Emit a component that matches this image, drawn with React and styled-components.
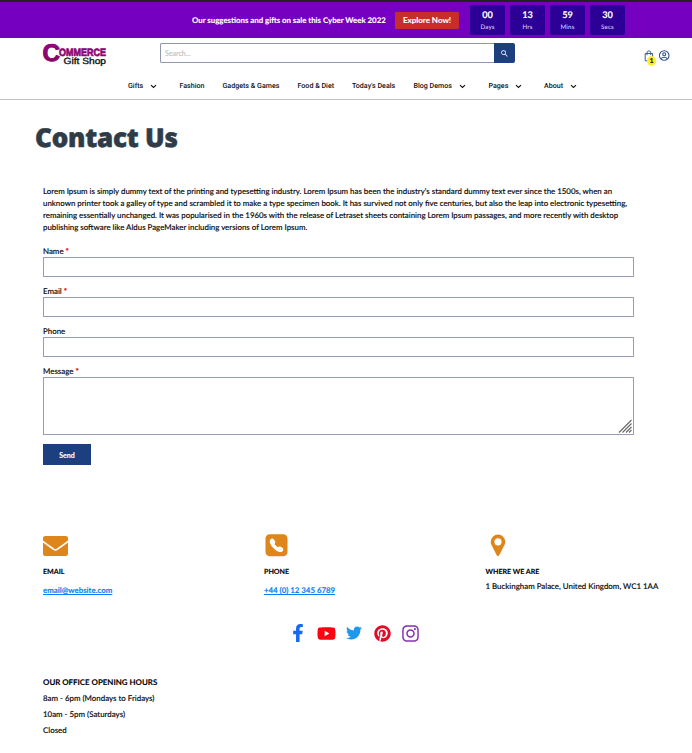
import React from "react";
import styled, { createGlobalStyle } from "styled-components";
import {
  FaFacebookF,
  FaYoutube,
  FaTwitter,
  FaPinterest,
  FaInstagram,
} from "react-icons/fa";
import { BsTelephoneFill } from "react-icons/bs";
import { MdSearch } from "react-icons/md";

const GlobalStyle = createGlobalStyle`
  *, *::before, *::after { box-sizing: border-box; }
  body {
    margin: 0;
    background: #fff;
    color: #080808;
    font-family: Lato, "Liberation Sans", sans-serif;
    font-size: 7.9px;
    font-weight: 500;
    line-height: 12px;
    text-rendering: geometricPrecision;
    -webkit-text-stroke: 0.12px;
  }
  h1, h2, p { margin: 0; }
`;

const Page = styled.div`
  height: 753px;
  overflow: hidden;
`;

const PromoBar = styled.div`
  height: 38px;
  border-top: 2px solid #222222;
  background: #7500c0;
  display: flex;
  align-items: center;
  padding-left: 192px;
  color: #fff;
`;

const PromoText = styled.span`
  width: 203px;
  font-size: 7.83px;
  font-weight: 700;
  white-space: nowrap;
`;

const PromoButton = styled.button`
  width: 64px;
  height: 17px;
  margin-right: 11px;
  padding: 0;
  border: 0;
  border-radius: 1px;
  background: #c82d2d;
  color: #fff;
  font: 700 8px Lato, sans-serif;
`;

const Countdown = styled.div`
  display: flex;
  gap: 5px;
`;

const CountBox = styled.div`
  width: 35px;
  height: 30px;
  border-radius: 2px;
  background: #2c0096;
  display: flex;
  flex-direction: column;
  align-items: center;
`;

const CountValue = styled.b`
  margin-top: 4px;
  font-size: 9.2px;
  font-weight: 700;
  line-height: 12px;
`;

const CountUnit = styled.span`
  margin-top: 2px;
  font-size: 6.2px;
  line-height: 9px;
  letter-spacing: 0.15px;
  color: #ddd0f5;
  -webkit-text-stroke: 0;
`;

const Header = styled.header`
  height: 62px;
  border-bottom: 1px solid #bfc3c2;
`;

const HeaderTop = styled.div`
  height: 35px;
  display: flex;
  align-items: flex-start;
  padding: 5px 22px 0 43px;
`;

const LogoLink = styled.a`
  width: 117px;
  height: 25px;
`;

const SearchForm = styled.form`
  display: flex;
  width: 355px;
  height: 20px;
`;

const SearchInput = styled.input`
  flex: 1;
  min-width: 0;
  padding: 0 0 0 4px;
  border: 1px solid #8e96b2;
  border-right: 0;
  border-radius: 2px 0 0 2px;
  font: 500 7px Lato, sans-serif;
  &::placeholder { color: #c2c2c2; }
`;

const SearchButton = styled.button`
  width: 21px;
  padding: 0;
  border: 0;
  border-radius: 0 2px 2px 0;
  background: #1c3f80;
  color: #fff;
  display: flex;
  align-items: center;
  justify-content: center;
`;

const Tools = styled.div`
  margin-left: auto;
  margin-top: 7px;
  display: flex;
  gap: 4px;
`;

const Bag = styled.span`
  position: relative;
  width: 11px;
  height: 12px;
`;

const BagCount = styled.span`
  position: absolute;
  left: 3px;
  top: 6px;
  width: 9px;
  height: 10px;
  border-radius: 50%;
  background: #ffee2e;
  color: #111;
  font-size: 7px;
  font-weight: 700;
  line-height: 11px;
  text-align: center;
`;

const Nav = styled.nav`
  display: flex;
  align-items: center;
  height: 26px;
  padding-left: 128px;
`;

const NavItem = styled.a`
  width: ${(p) => p.$width}px;
  display: flex;
  align-items: center;
  gap: 8px;
  font: 500 7.1px Roboto, sans-serif;
  line-height: 10px;
  white-space: nowrap;
  color: #111;
  -webkit-text-stroke: 0;
`;

const Title = styled.h1`
  margin: 19px 0 0 35px;
  font: 800 26px "Open Sans", sans-serif;
  line-height: 36px;
  letter-spacing: -0.22px;
  -webkit-text-stroke: 0.55px;
  color: #2f3c48;
`;

const Content = styled.main`
  padding: 30px 0 0 43px;
`;

const Intro = styled.p`
  width: 591px;
  font-size: 7.88px;
  white-space: pre;
`;

const ContactForm = styled.form`
  width: 591px;
  margin-top: 12px;
  display: flex;
  flex-direction: column;
`;

const Field = styled.label`
  display: flex;
  flex-direction: column;
  margin-bottom: 8px;
`;

const LabelText = styled.span`
  height: 12px;
`;

const Required = styled.span`
  color: #d40f0f;
  font-weight: 900;
`;

const TextInput = styled.input`
  height: 20px;
  border: 1px solid #979db5;
  padding: 0 4px;
`;

const MessageArea = styled.div`
  height: 58px;
  border: 1px solid #979db5;
  display: flex;
  align-items: flex-end;
  justify-content: flex-end;
  padding: 0 1px 1px 0;
`;

const MessageInput = styled.textarea`
  flex: 1;
  height: 100%;
  border: 0;
  resize: none;
  outline: 0;
`;

const SendButton = styled.button`
  width: 48px;
  height: 21px;
  margin-top: 1px;
  padding: 1px 0 0;
  border: 0;
  background: #1c3f80;
  color: #fff;
  font: 700 7px Lato, sans-serif;
`;

const Cards = styled.section`
  display: grid;
  grid-template-columns: 221px 221.5px 1fr;
  margin-top: 67px;
`;

const Card = styled.div`
  white-space: nowrap;
`;

const CardIcon = styled.div`
  height: 27px;
  display: flex;
  align-items: center;
`;

const CardTitle = styled.h2`
  margin-top: 7px;
  font-size: 7.1px;
  font-weight: 700;
  line-height: 12px;
  color: #000;
`;

const CardLink = styled.a`
  display: block;
  margin-top: 6px;
  font-size: 7.85px;
  font-weight: 700;
  color: #0a80f5;
  text-decoration: underline;
`;

const Address = styled.p`
  margin-top: 2px;
`;

const Socials = styled.div`
  display: flex;
  align-items: center;
  height: 20px;
  margin: 27px 0 0 241px;
`;

const SocialLink = styled.a`
  width: 28px;
  height: 20px;
  display: flex;
  align-items: center;
  justify-content: center;
  color: ${(p) => p.$color};
`;

const Hours = styled.section`
  margin-top: 31px;
  line-height: 16px;
`;

const HoursTitle = styled.h2`
  font-size: 7.9px;
  font-weight: 700;
  line-height: 16px;
  color: #000;
`;

const counts = [["00", "Days"], ["13", "Hrs"], ["59", "Mins"], ["30", "Secs"]];

const navItems = [
  { label: "Gifts", width: 51.5, menu: true },
  { label: "Fashion", width: 43 },
  { label: "Gadgets & Games", width: 75 },
  { label: "Food & Diet", width: 54.5 },
  { label: "Today's Deals", width: 61.5 },
  { label: "Blog Demos", width: 75, menu: true },
  { label: "Pages", width: 55.5, menu: true },
  { label: "About", width: 40, menu: true },
];

const socials = [
  { name: "Facebook", Icon: FaFacebookF, color: "#1769f0", size: 18 },
  { name: "YouTube", Icon: FaYoutube, color: "#fb0510", size: 19 },
  { name: "Twitter", Icon: FaTwitter, color: "#1d98ed", size: 16 },
  { name: "Pinterest", Icon: FaPinterest, color: "#e30a28", size: 17 },
  { name: "Instagram", Icon: FaInstagram, color: "#8732b2", size: 19 },
];

const introText = `Lorem Ipsum is simply dummy text of the printing and typesetting industry. Lorem Ipsum has been the industry's standard dummy text ever since the 1500s, when an
unknown printer took a galley of type and scrambled it to make a type specimen book. It has survived not only five centuries, but also the leap into electronic typesetting,
remaining essentially unchanged. It was popularised in the 1960s with the release of Letraset sheets containing Lorem Ipsum passages, and more recently with desktop
publishing software like Aldus PageMaker including versions of Lorem Ipsum.`;

function Logo() {
  return (
    <svg width="66" height="26" viewBox="0 0 66 26" overflow="visible" aria-label="Commerce Gift Shop">
      <defs>
        <linearGradient id="brand" x1="0" y1="0" x2="0" y2="1">
          <stop offset="0" stopColor="#95088f" />
          <stop offset="1" stopColor="#86004e" />
        </linearGradient>
      </defs>
      <g fontFamily="Liberation Sans, sans-serif">
        <text x="-0.5" y="18" fontSize="24" fontWeight="700" fill="url(#brand)" stroke="#8d0570" strokeWidth="1" textLength="17.5" lengthAdjust="spacingAndGlyphs">C</text>
        <text x="16" y="12.7" fontSize="10.6" fontWeight="700" fill="#8d0570" stroke="#8d0570" strokeWidth="0.7" textLength="47" lengthAdjust="spacingAndGlyphs">OMMERCE</text>
        <text x="20.5" y="20.8" fontSize="9" fill="#111" stroke="#111" strokeWidth="0.35" textLength="42.5" lengthAdjust="spacingAndGlyphs">Gift Shop</text>
      </g>
    </svg>
  );
}

function Chevron() {
  return (
    <svg width="5" height="4" viewBox="0 0 5 4" fill="none" stroke="#111" strokeWidth="1.1" overflow="visible">
      <path d="M0 1.2 2.5 3.5 5 1.2" />
    </svg>
  );
}

function BagIcon() {
  return (
    <svg width="10" height="12" viewBox="0 0 10 12" fill="none" stroke="#3d5c94" strokeWidth="1">
      <path d="M1.2 3.5h7.4v7.3H1.2zM3 5.2V2.8a1.9 1.9 0 0 1 3.8 0v2.4" />
    </svg>
  );
}

function UserIcon() {
  return (
    <svg width="11" height="11" viewBox="0 0 11 11" fill="none" stroke="#2d5190" strokeWidth="1.1">
      <circle cx="5.2" cy="5.5" r="4.8" />
      <circle cx="5.2" cy="4.3" r="1.5" />
      <path d="M2.1 8.8c.6-1.1 1.7-1.5 3.1-1.5s2.5.4 3.1 1.5" />
    </svg>
  );
}

function ResizeGrip() {
  return (
    <svg width="14" height="14" viewBox="0 0 14 14" stroke="#666" strokeWidth="1.1">
      <path d="M1 13.500 13.500 1M4.500 13.500l9-9M8 13.500l5.500-5.500M11 13.500l2.500-2.500" />
    </svg>
  );
}

function EnvelopeIcon() {
  return (
    <svg width="25" height="27" viewBox="0 0 25 27">
      <rect y="4" width="25" height="20" rx="2.2" fill="#de861c" />
      <path d="M-.5 9.2C4 12.7 8 15.3 10.5 17.1c1.5 1.1 2.5 1.1 4 0C17 15.3 21 12.7 25.5 9.2" fill="none" stroke="#fff" strokeWidth="1.6" />
    </svg>
  );
}

function PhoneIcon() {
  return (
    <svg width="25" height="27" viewBox="0 0 25 27">
      <rect x="1.5" y="2.3" width="22" height="22" rx="4.2" fill="#de861c" />
      <BsTelephoneFill x="5.5" y="6.3" size={14} color="#fff" />
    </svg>
  );
}

function PinIcon() {
  return (
    <svg width="25" height="27" viewBox="0 0 25 27">
      <path
        d="M12 2.5a7.3 7.3 0 0 0-7.3 7.3c0 1.3.3 2.3.8 3.3l5.2 10.2c.5 1.1 2.1 1.1 2.6 0l5.2-10.2c.5-1 .8-2 .8-3.3A7.3 7.3 0 0 0 12 2.5zm0 3.700a3.6 3.6 0 1 1 0 7.2 3.6 3.6 0 0 1 0-7.2z"
        fill="#de861c"
      />
    </svg>
  );
}

export default function App() {
  return (
    <Page>
      <GlobalStyle />
      <PromoBar>
        <PromoText>Our suggestions and gifts on sale this Cyber Week 2022</PromoText>
        <PromoButton>Explore Now!</PromoButton>
        <Countdown>
          {counts.map(([value, unit]) => (
            <CountBox key={unit}>
              <CountValue>{value}</CountValue>
              <CountUnit>{unit}</CountUnit>
            </CountBox>
          ))}
        </Countdown>
      </PromoBar>
      <Header>
        <HeaderTop>
          <LogoLink><Logo /></LogoLink>
          <SearchForm>
            <SearchInput placeholder="Search..." />
            <SearchButton type="button" aria-label="Search"><MdSearch size={9} /></SearchButton>
          </SearchForm>
          <Tools>
            <Bag><BagIcon /><BagCount>1</BagCount></Bag>
            <UserIcon />
          </Tools>
        </HeaderTop>
        <Nav>
          {navItems.map((item) => (
            <NavItem key={item.label} $width={item.width}>
              {item.label}
              {item.menu && <Chevron />}
            </NavItem>
          ))}
        </Nav>
      </Header>
      <Title>Contact Us</Title>
      <Content>
        <Intro>{introText}</Intro>
        <ContactForm>
          <Field><LabelText>Name <Required>*</Required></LabelText><TextInput /></Field>
          <Field><LabelText>Email <Required>*</Required></LabelText><TextInput /></Field>
          <Field><LabelText>Phone</LabelText><TextInput /></Field>
          <Field>
            <LabelText>Message <Required>*</Required></LabelText>
            <MessageArea><MessageInput /><ResizeGrip /></MessageArea>
          </Field>
          <SendButton type="button">Send</SendButton>
        </ContactForm>
        <Cards>
          <Card>
            <CardIcon><EnvelopeIcon /></CardIcon>
            <CardTitle>EMAIL</CardTitle>
            <CardLink>email@website.com</CardLink>
          </Card>
          <Card>
            <CardIcon><PhoneIcon /></CardIcon>
            <CardTitle>PHONE</CardTitle>
            <CardLink>+44 (0) 12 345 6789</CardLink>
          </Card>
          <Card>
            <CardIcon><PinIcon /></CardIcon>
            <CardTitle>WHERE WE ARE</CardTitle>
            <Address>1 Buckingham Palace, United Kingdom, WC1 1AA</Address>
          </Card>
        </Cards>
        <Socials>
          {socials.map(({ name, Icon, color, size }) => (
            <SocialLink key={name} $color={color} aria-label={name}><Icon size={size} /></SocialLink>
          ))}
        </Socials>
        <Hours>
          <HoursTitle>OUR OFFICE OPENING HOURS</HoursTitle>
          <p>8am - 6pm (Mondays to Fridays)</p>
          <p>10am - 5pm (Saturdays)</p>
          <p>Closed</p>
        </Hours>
      </Content>
    </Page>
  );
}
